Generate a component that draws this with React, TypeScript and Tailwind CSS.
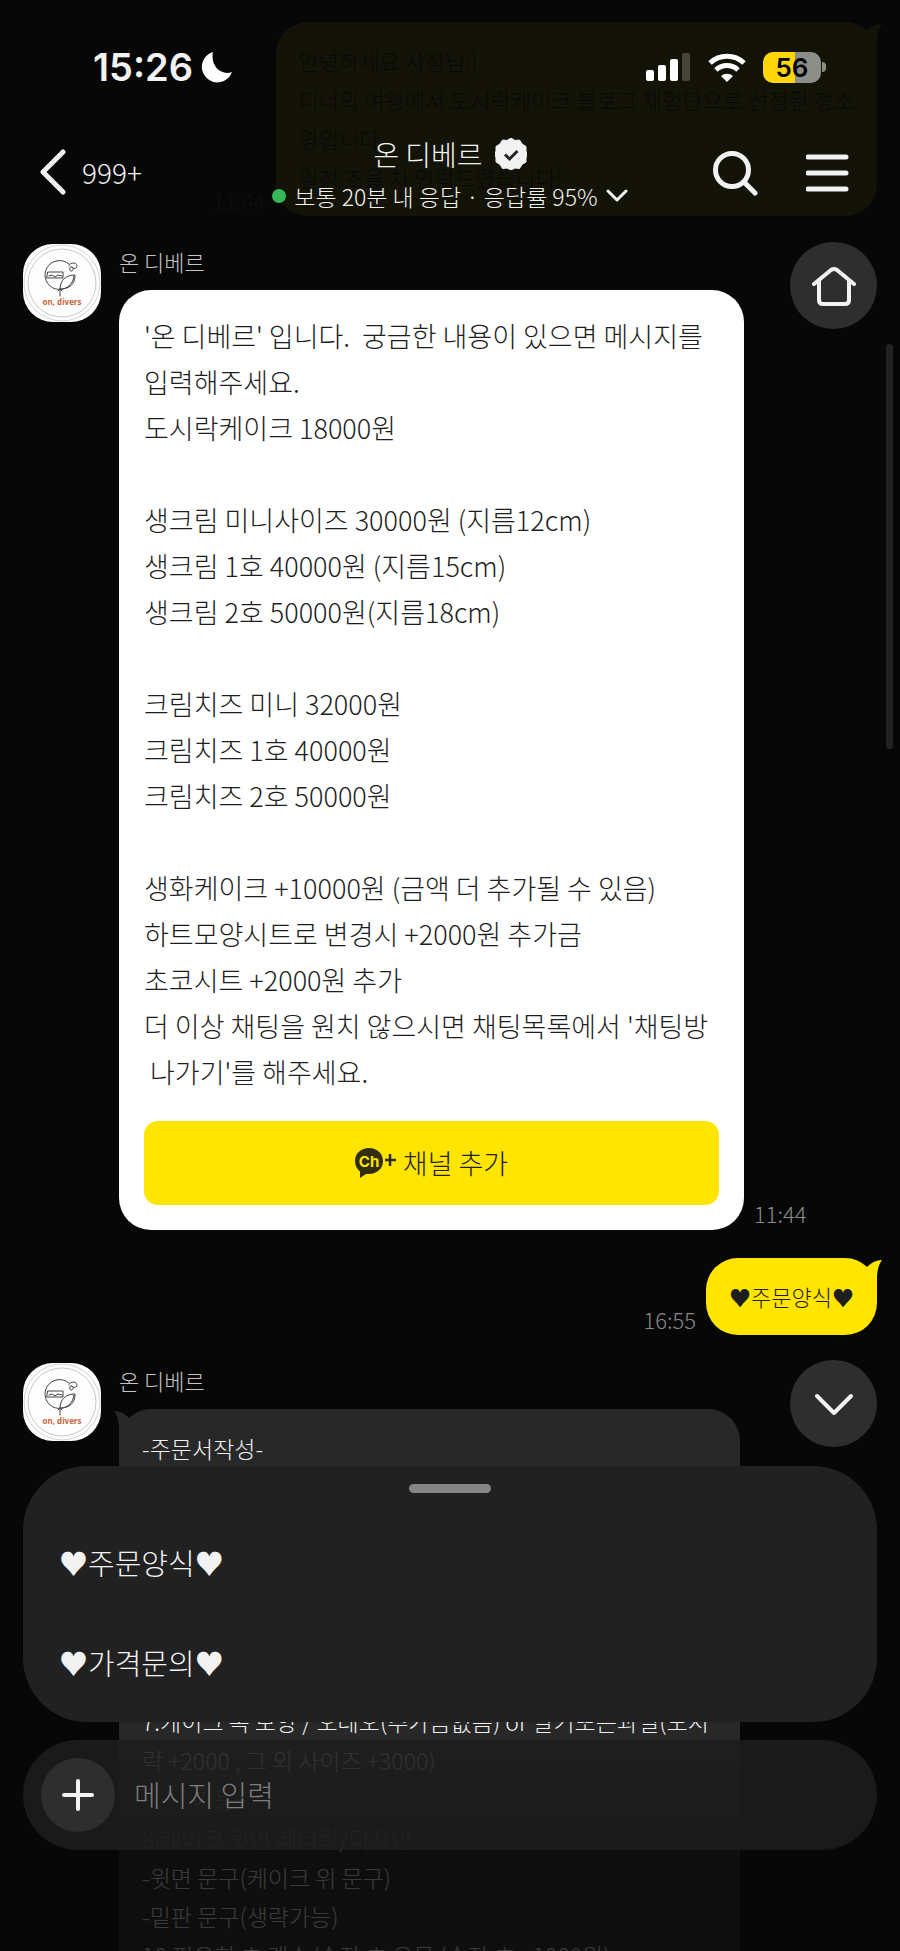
import { useState } from 'react';

type Message = {
  id: number;
  from: 'me' | 'channel';
  kind: 'text' | 'notice';
  time: string;
  text: string;
};

const messages: Message[] = [
  {
    id: 1,
    from: 'me',
    kind: 'text',
    time: '11:44',
    text: `안녕하세요 사장님:)
디너의 여왕에서 도시락케이크 블로그 체험단으로 선정된 정소
영입니다
일정 조율 차 연락드렸습니다!`,
  },
  {
    id: 2,
    from: 'channel',
    kind: 'notice',
    time: '11:44',
    text: `'온 디베르' 입니다.  궁금한 내용이 있으면 메시지를
입력해주세요.
도시락케이크 18000원

생크림 미니사이즈 30000원 (지름12cm)
생크림 1호 40000원 (지름15cm)
생크림 2호 50000원(지름18cm)

크림치즈 미니 32000원
크림치즈 1호 40000원
크림치즈 2호 50000원

생화케이크 +10000원 (금액 더 추가될 수 있음)
하트모양시트로 변경시 +2000원 추가금
초코시트 +2000원 추가
더 이상 채팅을 원치 않으시면 채팅목록에서 '채팅방
 나가기'를 해주세요.`,
  },
  { id: 3, from: 'me', kind: 'text', time: '16:55', text: '♥주문양식♥' },
  {
    id: 4,
    from: 'channel',
    kind: 'text',
    time: '',
    text: `-주문서작성-






7.케이크 속 모양 / 오레오(추가금없음) or 딸기또는과일(도시
락 +2000 , 그 외 사이즈 +3000)
          가능+
8.케이크 윗면 레터링/디자인
-윗면 문구(케이크 위 문구)
-밑판 문구(생략가능)
10.필요한 초 갯수/숫자 초 유무 (숫자 초 +1000원)`,
  },
];

const quickReplies = ['♥주문양식♥', '♥가격문의♥'];

function Avatar() {
  return (
    <svg viewBox="0 0 78 78" className="size-[78px] shrink-0" fill="none">
      <rect width="78" height="78" rx="30" fill="#fdfdfd" />
      <circle cx="39" cy="39" r="38" stroke="#d4d4d4" />
      <circle cx="39" cy="39" r="34" stroke="#c9c9c9" />
      <g stroke="#444" strokeWidth="1" strokeLinecap="round" strokeLinejoin="round">
        <path d="M46 20a14.500 14.500 0 1 0 5 12" />
        <path d="M25 28h15v6H24zM26 32l3-1 3 2 3-2 4 1" />
        <path d="M37 45c0-9 6-14 15-14 0 9-5 14-15 14z" />
        <path d="M37 45v7M35 47l2-2 2 2" />
        <path d="M46 22c0-4 8-4 8 0 0 3-4 3-5 1-3-1-3 5 0 4 2-1 1-4 0-4" />
      </g>
      <text
        x="39"
        y="61"
        textAnchor="middle"
        fontSize="8"
        fontWeight="700"
        fontFamily="Open Sans, sans-serif"
        fill="#c8663a"
      >
        on, divers
      </text>
    </svg>
  );
}

function StatusBar() {
  return (
    <div className="flex items-center justify-between pt-[43px] pl-[93px] pr-[74px]">
      <div className="flex items-center gap-2">
        <span className="text-[38px] leading-[48px] font-semibold font-['Inter',sans-serif]">
          15:26
        </span>
        <svg viewBox="0 0 32 32" className="size-8" fill="#fff">
          <path d="M12 1A15.500 15.500 0 1 0 31 21C20 25 9 15 12 1z" />
        </svg>
      </div>
      <div className="flex items-center gap-4">
        <svg viewBox="0 0 46 30" className="h-[30px] w-[46px]" fill="#fff">
          <rect x="1" y="18" width="8" height="11" rx="2" />
          <rect x="13" y="13" width="8" height="16" rx="2" />
          <rect x="25" y="7" width="8" height="22" rx="2" />
          <rect x="37" y="1" width="8" height="28" rx="2" fill="#45453c" />
        </svg>
        <svg viewBox="0 0 40 30" className="h-[30px] w-10" fill="none" stroke="#fff">
          <path d="M3 11a25 25 0 0 1 34 0" strokeWidth="5" />
          <path d="M9 18a16 16 0 0 1 22 0" strokeWidth="5" />
          <path d="M20 30l-6-6a9 9 0 0 1 12 0z" fill="#fff" stroke="none" />
        </svg>
        <div className="flex items-center gap-px">
          <div className="flex h-[31px] w-[58px] items-center justify-center rounded-[10px] bg-linear-to-r from-[#ffd60a] from-56% to-[#8e8e88] to-56% text-[26px] leading-[31px] font-semibold text-black font-['Inter',sans-serif]">
            56
          </div>
          <span className="h-[10px] w-1 rounded-r-full bg-[#8e8e88]" />
        </div>
      </div>
    </div>
  );
}

function Header() {
  return (
    <header className="absolute inset-x-0 top-0 h-[224px] bg-[#070707]/95 text-[#f2f2f2]">
      <StatusBar />
      <div className="mt-[41px] flex items-start justify-between pr-[50px] pl-10">
        <button type="button" className="flex w-[176px] items-center gap-4 pt-4">
          <svg
            viewBox="0 0 26 48"
            className="h-12 w-[26px]"
            fill="none"
            stroke="currentColor"
            strokeWidth="5"
            strokeLinecap="round"
            strokeLinejoin="round"
          >
            <path d="M23 4L3 24l20 20" />
          </svg>
          <span className="text-[28px] leading-[40px]">999+</span>
        </button>
        <div className="flex flex-col items-center">
          <h1 className="flex items-center gap-3 text-[28px] leading-[44px]">
            온 디베르
            <svg viewBox="0 0 32 32" className="size-8">
              <path
                fill="#f2f2f2"
                d="M16 0l4 2.500 4.500-.5 2.500 4 4 2.500v4.500L32 16l-1 4v4l-4 2.500-2.500 4L20 30l-4 2-4-2-4.500.500-2.500-4L1 24v-4l-1-4 1-3V8.500L5 6l2.500-4 4.500.500z"
                stroke="#f2f2f2"
                strokeLinejoin="round"
              />
              <path
                d="M10 16.500l4.500 4.500 8-8"
                fill="none"
                stroke="#222"
                strokeWidth="3"
              />
            </svg>
          </h1>
          <button
            type="button"
            className="flex items-center gap-2 text-[23px] leading-[40px]"
          >
            <span className="size-[14px] rounded-full bg-[#34b759]" />
            <span className="whitespace-nowrap">보통 20분 내 응답 · 응답률 95%</span>
            <svg
              viewBox="0 0 22 14"
              className="h-[14px] w-[22px]"
              fill="none"
              stroke="currentColor"
              strokeWidth="3"
              strokeLinecap="round"
              strokeLinejoin="round"
            >
              <path d="M2 2l9 9 9-9" />
            </svg>
          </button>
        </div>
        <div className="flex w-[166px] items-center justify-end gap-12 pt-[18px]">
          <button type="button" aria-label="검색">
            <svg
              viewBox="0 0 46 46"
              className="size-[46px]"
              fill="none"
              stroke="currentColor"
              strokeWidth="5"
              strokeLinecap="round"
            >
              <circle cx="20" cy="20" r="16.500" />
              <path d="M32 32l11 11" />
            </svg>
          </button>
          <button type="button" aria-label="메뉴">
            <svg
              viewBox="0 0 44 44"
              className="size-11"
              stroke="currentColor"
              strokeWidth="5"
              strokeLinecap="round"
            >
              <path d="M2 6h38M2 22h38M2 38h38" />
            </svg>
          </button>
        </div>
      </div>
    </header>
  );
}

function Tail({ side }: { side: 'left' | 'right' }) {
  return (
    <svg
      viewBox="0 0 22 30"
      className={
        side === 'right'
          ? 'absolute top-[2px] -right-[5px] h-[30px] w-[22px] text-[#ffe500]'
          : 'absolute top-[2px] -left-[5px] h-[30px] w-[22px] -scale-x-100 text-[#282828]'
      }
      fill="currentColor"
    >
      <path d="M22 0C16 0 11 3 7 7L0 20l17 10V18C17 10 19 4 22 0z" />
    </svg>
  );
}

function MyMessage({ message }: { message: Message }) {
  return (
    <div className="flex items-end justify-end gap-[10px] pr-[23px]">
      <time className="text-[22px] leading-[32px] text-[#8a8a8a]">{message.time}</time>
      <div className="relative rounded-[32px] bg-[#ffe500] px-[23px] py-[19px] text-[22px] leading-[39px] whitespace-pre text-[#1e1e1e]">
        <Tail side="right" />
        {message.text}
      </div>
    </div>
  );
}

function Notice({ message }: { message: Message }) {
  return (
    <div className="flex items-end gap-[10px]">
      <div className="w-[625px] rounded-[32px] bg-white px-[25px] pt-[23px] pb-[25px] text-[27px] text-[#1e1e1e]">
        <p className="leading-[46px] whitespace-pre">{message.text}</p>
        <button
          type="button"
          className="mt-[26px] flex h-[84px] w-full items-center justify-center gap-[6px] rounded-[14px] bg-[#ffe500]"
        >
          <svg viewBox="0 0 42 30" className="h-[30px] w-[42px]" fill="#322d0c">
            <path d="M14 0C6 0 0 5.500 0 13c0 4.500 2 8 5 10.500V30l6-4h3c8 0 14-5.500 14-13S22 0 14 0z" />
            <path d="M35 6v12M30 12h11" stroke="#322d0c" strokeWidth="2.500" />
            <text
              x="14"
              y="19"
              textAnchor="middle"
              fontSize="15"
              fontWeight="700"
              fontFamily="Inter, sans-serif"
              fill="#ffe500"
            >
              Ch
            </text>
          </svg>
          채널 추가
        </button>
      </div>
      <time className="text-[22px] leading-[34px] text-[#8a8a8a]">{message.time}</time>
    </div>
  );
}

function ChannelMessage({ message }: { message: Message }) {
  return (
    <div className="flex items-start gap-[18px] pl-[23px]">
      <Avatar />
      <div>
        <div className="mb-3 text-[22px] leading-[34px] text-[#c4c4c4]">온 디베르</div>
        {message.kind === 'notice' ? (
          <Notice message={message} />
        ) : (
          <div className="relative w-[621px] rounded-[32px] bg-[#282828] px-[23px] py-5 text-[23px] leading-[39px] whitespace-pre text-[#f0f0f0]">
            <Tail side="left" />
            {message.text}
          </div>
        )}
      </div>
    </div>
  );
}

function Composer({
  draft,
  setDraft,
}: {
  draft: string;
  setDraft: (value: string) => void;
}) {
  return (
    <div className="absolute inset-x-0 bottom-0 px-[23px] pb-[101px]">
      <div className="absolute inset-x-0 bottom-0 h-[216px] bg-linear-to-b from-[#070707]/0 to-[#070707]/78 to-40%" />
      <div className="relative rounded-[64px] bg-[#212121] px-[36px] pt-[18px] pb-[9px]">
        <div className="mx-auto h-[9px] w-[82px] rounded-full bg-[#858585]" />
        <ul className="mt-5">
          {quickReplies.map((reply) => (
            <li key={reply}>
              <button
                type="button"
                className="block h-[100px] w-full text-left text-[29px] text-[#f2f2f2]"
                onClick={() => setDraft(reply)}
              >
                {reply}
              </button>
            </li>
          ))}
        </ul>
      </div>
      <div className="relative mt-[18px] flex h-[110px] items-center gap-[19px] rounded-full bg-[#1e1e1e]/88 pr-8 pl-[18px]">
        <button
          type="button"
          aria-label="추가"
          className="flex size-[74px] shrink-0 items-center justify-center rounded-full bg-[#2e2e2e]"
        >
          <svg
            viewBox="0 0 32 32"
            className="size-8"
            stroke="#f2f2f2"
            strokeWidth="4"
            strokeLinecap="round"
          >
            <path d="M16 2v28M2 16h28" />
          </svg>
        </button>
        <input
          type="text"
          aria-label="메시지 입력"
          placeholder="메시지 입력"
          value={draft}
          onChange={(e) => setDraft(e.target.value)}
          className="w-full bg-transparent text-[29px] text-[#f2f2f2] placeholder:text-[#7d7d7d] focus:outline-none"
        />
      </div>
    </div>
  );
}

export default function App() {
  const [draft, setDraft] = useState('');

  return (
    <div className="relative h-screen overflow-hidden bg-[#070707] font-light font-['Noto_Sans_CJK_KR',sans-serif]">
      <main className="flex flex-col gap-7 pt-[22px]">
        {messages.map((message) =>
          message.from === 'me' ? (
            <MyMessage key={message.id} message={message} />
          ) : (
            <ChannelMessage key={message.id} message={message} />
          ),
        )}
      </main>

      <Header />

      <div className="absolute top-[344px] right-[7px] h-[405px] w-[7px] rounded-full bg-[#222]" />
      <button
        type="button"
        aria-label="홈"
        className="absolute top-[242px] right-[23px] flex size-[87px] items-center justify-center rounded-full bg-[#2e2e2e]"
      >
        <svg
          viewBox="0 0 46 40"
          className="h-10 w-[46px]"
          fill="none"
          stroke="#f2f2f2"
          strokeWidth="4"
          strokeLinecap="round"
          strokeLinejoin="round"
        >
          <path d="M3 18L20 4q3-2 6 0l17 14" />
          <path d="M8 15v19q0 4 4 4h22q4 0 4-4V15" />
        </svg>
      </button>
      <button
        type="button"
        aria-label="아래로"
        className="absolute right-[23px] bottom-[504px] flex size-[87px] items-center justify-center rounded-full bg-[#2e2e2e]"
      >
        <svg
          viewBox="0 0 40 24"
          className="h-6 w-10"
          fill="none"
          stroke="#f2f2f2"
          strokeWidth="4"
          strokeLinecap="round"
          strokeLinejoin="round"
        >
          <path d="M3 4l17 17L37 4" />
        </svg>
      </button>

      <Composer draft={draft} setDraft={setDraft} />
    </div>
  );
}
